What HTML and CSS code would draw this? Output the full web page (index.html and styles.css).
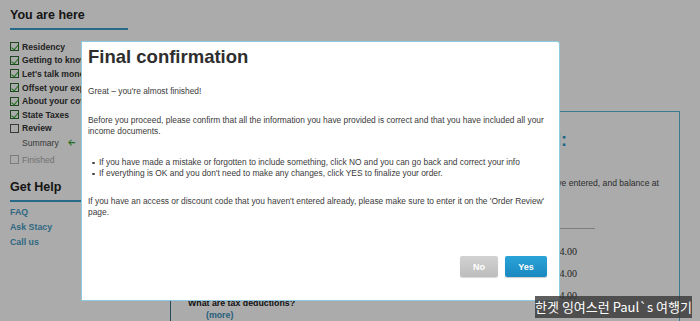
FILE: index.html
```html
<!DOCTYPE html>
<html lang="en">
<head>
<meta charset="utf-8">
<title>Final confirmation</title>
<link rel="stylesheet" href="styles.css">
</head>
<body>
<div class="page">
  <aside class="sidebar">
    <h2 class="side-title">You are here</h2>
    <ul class="steps">
      <li class="step done"><span class="box"></span>Residency</li>
      <li class="step done"><span class="box"></span>Getting to know you</li>
      <li class="step done"><span class="box"></span>Let's talk money</li>
      <li class="step done"><span class="box"></span>Offset your expenses</li>
      <li class="step done"><span class="box"></span>About your coverage</li>
      <li class="step done"><span class="box"></span>State Taxes</li>
      <li class="step"><span class="box"></span>Review</li>
      <li class="substep">Summary <span class="arrow">&#129120;</span></li>
      <li class="step muted"><span class="box"></span>Finished</li>
    </ul>
    <h2 class="side-title help">Get Help</h2>
    <ul class="links">
      <li>FAQ</li>
      <li>Ask Stacy</li>
      <li>Call us</li>
    </ul>
  </aside>
  <main class="main">
    <div class="col-left">
      <div class="faq-item">
        <p class="faq-q">What are tax deductions?</p>
        <p class="faq-more">(more)</p>
      </div>
    </div>
    <section class="summary">
      <h3 class="sum-title"><span>Your total:</span></h3>
      <p class="sum-text"><span>Here is what you owe, any codes you've entered, and balance at</span></p>
      <div class="sum-rule"></div>
      <div class="sum-row"><span>$4.00</span></div>
      <div class="sum-row"><span>$4.00</span></div>
      <div class="sum-row"><span>$4.00</span></div>
    </section>
  </main>
</div>

<div class="overlay"></div>

<div class="modal">
  <h1 class="modal-title">Final confirmation</h1>
  <p class="mp first">Great – you're almost finished!</p>
  <p class="mp second">Before you proceed, please confirm that all the information you have provided is correct and that you have included all your income documents.</p>
  <ul class="mlist">
    <li>If you have made a mistake or forgotten to include something, click NO and you can go back and correct your info</li>
    <li>If everything is OK and you don't need to make any changes, click YES to finalize your order.</li>
  </ul>
  <p class="mp third">If you have an access or discount code that you haven't entered already, please make sure to enter it on the 'Order Review' page.</p>
  <div class="actions">
    <button class="btn btn-no">No</button>
    <button class="btn btn-yes">Yes</button>
  </div>
</div>

<div class="watermark">한겟 잉여스런 Paul`s 여행기</div>
</body>
</html>
```

FILE: styles.css
```css
* { box-sizing: border-box; }
html, body { margin: 0; padding: 0; }
body {
  width: 700px;
  height: 321px;
  overflow: hidden;
  background: #fff;
  font-family: "Liberation Sans", Arial, sans-serif;
  color: #333;
  position: relative;
}
.page {
  display: flex;
  height: 321px;
  overflow: hidden;
}
.sidebar {
  width: 160px;
  flex: none;
  padding: 8px 0 0 10px;
}
.side-title {
  margin: 0;
  font-size: 12.5px;
  font-weight: bold;
  color: #222;
  width: 118px;
  padding-bottom: 6px;
  border-bottom: 2px solid #3a9fca;
}
.side-title.help { margin-top: 14px; width: 150px; }
.steps {
  list-style: none;
  margin: 10px 0 0;
  padding: 0;
}
.step, .substep {
  height: 13.6px;
  display: flex;
  align-items: center;
  font-size: 8.6px;
  font-weight: bold;
  color: #333;
  white-space: nowrap;
}
.box {
  width: 9px;
  height: 9px;
  border: 1px solid #555;
  margin-right: 3px;
  flex: none;
  position: relative;
  background: #fff;
}
.step.done .box {
  border-color: #2f6b2f;
}
.step.done .box::after {
  content: "";
  position: absolute;
  left: 2px;
  top: 0;
  width: 3px;
  height: 6px;
  border: solid #29a329;
  border-width: 0 1.5px 1.5px 0;
  transform: rotate(40deg);
}
.substep {
  padding-left: 12px;
  font-weight: normal;
  color: #555;
  margin-top: 1px;
}
.arrow {
  color: #2aa52a;
  margin-left: 9px;
  font-family: "DejaVu Sans", sans-serif;
  font-weight: bold;
  font-size: 9px;
}
.step.muted { color: #aaa; font-weight: normal; margin-top: 3px; }
.step.muted .box { border-color: #bbb; }
.links {
  list-style: none;
  margin: 3px 0 0;
  padding: 0;
}
.links li {
  font-size: 8.8px;
  font-weight: bold;
  color: #4a9cc4;
  height: 15px;
  line-height: 15px;
}
.main {
  flex: 1;
  display: flex;
  padding-left: 10px;
}
.col-left {
  width: 378px;
  flex: none;
  padding-top: 248px;
}
.faq-item {
  border-left: 1px solid #3a6f85;
  height: 80px;
  padding: 50px 0 0 17px;
}
.faq-q {
  margin: 0;
  font-size: 8.8px;
  font-weight: bold;
  color: #222;
}
.faq-more {
  margin: 2px 0 0;
  padding-left: 18px;
  font-size: 8.8px;
  font-weight: bold;
  color: #3a8fb8;
}
.summary {
  margin-top: 111px;
  width: 132px;
  height: 230px;
  flex: none;
  border-top: 1.5px solid #5ab6da;
  border-right: 1.5px solid #5ab6da;
  padding: 18px 20px 0 0;
}
.sum-title, .sum-text, .sum-row {
  display: flex;
  justify-content: flex-end;
  white-space: nowrap;
}
.sum-title {
  margin: 0;
  font-size: 18px;
  color: #2a9ac8;
  padding-right: 92px;
}
.sum-text {
  margin: 27px 0 0;
  font-size: 8.6px;
  color: #444;
}
.sum-rule {
  margin: 40px 0 0 -50px;
  width: 97px;
  border-top: 1px solid #bbb;
}
.sum-row {
  font-family: "Liberation Serif", serif;
  font-size: 10px;
  color: #333;
  padding-right: 82px;
  height: 22px;
  line-height: 22px;
}
.sum-rule + .sum-row { margin-top: 12px; }

.overlay {
  position: absolute;
  inset: 0;
  background: rgba(0, 0, 0, 0.33);
}
.modal {
  position: absolute;
  left: 81px;
  top: 41px;
  width: 479px;
  height: 260px;
  background: #fff;
  border: 1.5px solid #8ccbe0;
  border-radius: 0 3px 0 0;
  padding: 3px 12px 0 6px;
  color: #3a3a3a;
}
.modal-title {
  margin: 0;
  font-size: 18.5px;
  font-weight: bold;
  color: #2e2e2e;
  line-height: 24px;
}
.mp {
  margin: 0;
  font-size: 8.4px;
  line-height: 11px;
}
.mp.first { margin-top: 17px; }
.mp.second { margin-top: 18px; }
.mp.third { margin-top: 17px; }
.mlist {
  list-style: none;
  margin: 20px 0 0;
  padding: 0 0 0 11px;
  font-size: 8.4px;
  line-height: 11px;
}
.mlist li {
  position: relative;
}
.mlist li::before {
  content: "";
  position: absolute;
  left: -7px;
  top: 4.5px;
  width: 2.5px;
  height: 2.5px;
  border-radius: 50%;
  background: #444;
}
.actions {
  display: flex;
  justify-content: flex-end;
  gap: 7px;
  margin-top: 38px;
}
.btn {
  border: 0;
  height: 21px;
  border-radius: 2px;
  font-family: "Liberation Sans", Arial, sans-serif;
  font-size: 9px;
  font-weight: bold;
  color: #fff;
  padding: 0;
}
.btn-no {
  width: 38px;
  background: linear-gradient(#d2d2d2, #bdbdbd);
  box-shadow: 0 1px 1px rgba(0,0,0,0.15);
}
.btn-yes {
  width: 42px;
  background: linear-gradient(#2aa3d8, #1a88c0);
  box-shadow: 0 1px 1px rgba(0,0,0,0.2);
}
.watermark {
  position: absolute;
  left: 535px;
  top: 296px;
  width: 157px;
  height: 22px;
  background: rgba(55, 55, 55, 0.8);
  color: #fff;
  font-family: "Noto Sans CJK KR", sans-serif;
  font-size: 13px;
  line-height: 22px;
  text-align: center;
  white-space: nowrap;
}
```
